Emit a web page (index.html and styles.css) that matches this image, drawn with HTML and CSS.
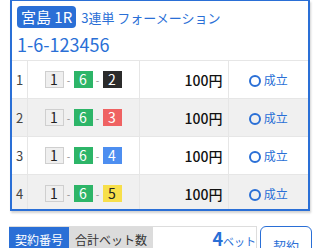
FILE: index.html
```html
<!DOCTYPE html>
<html lang="ja">
<head>
<meta charset="utf-8">
<link rel="stylesheet" href="styles.css">
</head>
<body>
<div class="card">
  <div class="head">
    <div class="title-line">
      <span class="badge">宮島 1R</span>
      <span class="title">3連単 フォーメーション</span>
    </div>
    <div class="combo-text">1-6-123456</div>
  </div>
  <table class="bets">
    <tr>
      <td class="no">1</td>
      <td class="combo"><span class="box b1">1</span><span class="dash">-</span><span class="box b6">6</span><span class="dash">-</span><span class="box b2">2</span></td>
      <td class="amt">100円</td>
      <td class="st"><span class="ring"></span>成立</td>
    </tr>
    <tr class="alt">
      <td class="no">2</td>
      <td class="combo"><span class="box b1">1</span><span class="dash">-</span><span class="box b6">6</span><span class="dash">-</span><span class="box b3">3</span></td>
      <td class="amt">100円</td>
      <td class="st"><span class="ring"></span>成立</td>
    </tr>
    <tr>
      <td class="no">3</td>
      <td class="combo"><span class="box b1">1</span><span class="dash">-</span><span class="box b6">6</span><span class="dash">-</span><span class="box b4">4</span></td>
      <td class="amt">100円</td>
      <td class="st"><span class="ring"></span>成立</td>
    </tr>
    <tr class="alt">
      <td class="no">4</td>
      <td class="combo"><span class="box b1">1</span><span class="dash">-</span><span class="box b6">6</span><span class="dash">-</span><span class="box b5">5</span></td>
      <td class="amt">100円</td>
      <td class="st"><span class="ring"></span>成立</td>
    </tr>
  </table>
</div>
<div class="footer">
  <div class="summary">
    <span class="tab on">契約番号</span>
    <span class="tab">合計ベット数</span>
    <span class="count"><b>4</b>ベット</span>
  </div>
  <button class="btn">契約</button>
</div>
</body>
</html>
```

FILE: styles.css
```css
* { box-sizing: border-box; }
body {
  margin: 0;
  background: #fff;
  font-family: "Noto Sans CJK JP", "Noto Sans", sans-serif;
  color: #222;
}
.card {
  margin-left: 10px;
  width: 300px;
  height: 211px;
  border: 2px solid #2a6fd6;
  border-top-width: 1px;
  overflow: hidden;
  box-shadow: 1px 2px 2px rgba(0,0,0,0.18);
  background: #fff;
}
.head {
  padding: 5px 5px 0 5px;
  height: 59px;
}
.title-line {
  display: flex;
  align-items: center;
  gap: 5px;
  height: 22px;
}
.badge {
  background: #2a6fd6;
  color: #fff;
  font-size: 15px;
  line-height: 22px;
  height: 22px;
  padding: 0 4px;
  border-radius: 4px;
}
.title {
  color: #2a6fd6;
  font-size: 13px;
}
.combo-text {
  color: #2a6fd6;
  font-size: 18px;
  line-height: 24px;
  margin-top: 4px;
}
.bets {
  width: 296px;
  border-collapse: collapse;
  table-layout: fixed;
}
.bets td {
  height: 38px;
  border-top: 1px solid #e6e6e6;
  border-left: 1px solid #e6e6e6;
  padding: 0;
}
.bets td:first-child { border-left: none; }
.bets tr.alt td { background: #f0f0f0; }
.no {
  width: 15px;
  font-size: 13px;
  color: #444;
  padding-left: 4px !important;
}
.combo {
  width: 112px;
  text-align: center;
  font-size: 0;
}
.box {
  display: inline-block;
  width: 19px;
  height: 17px;
  line-height: 17px;
  font-size: 14px;
  text-align: center;
  vertical-align: middle;
  color: #fff;
}
.b1 { background: #efefef; color: #222; border: 1px solid #cfcfcf; line-height: 15px; }
.b6 { background: #2db568; }
.b2 { background: #2b2b2b; }
.b3 { background: #ef6262; }
.b4 { background: #4d8ef0; }
.b5 { background: #f7df4a; color: #222; }
.dash {
  display: inline-block;
  width: 10px;
  font-size: 10px;
  color: #888;
  vertical-align: middle;
  text-align: center;
}
.amt {
  width: 89px;
  text-align: right;
  font-size: 14px;
  font-weight: 500;
  color: #111;
  padding-right: 5px !important;
}
.st {
  text-align: center;
  color: #2a6fd6;
  font-size: 12px;
}
.ring {
  display: inline-block;
  width: 12px;
  height: 12px;
  border: 2px solid #2a6fd6;
  border-radius: 50%;
  vertical-align: -2px;
  margin-right: 3px;
}
.footer {
  display: flex;
  gap: 3px;
  margin-top: 15px;
  padding-left: 9px;
}
.summary {
  display: flex;
  align-items: flex-start;
  width: 248px;
  height: 30px;
  border: 1px solid #dddddd;
  border-left: none;
}
.tab {
  font-size: 12px;
  line-height: 22px;
  padding: 2px 6px 0;
  background: #dcdcdc;
  color: #333;
}
.tab.on {
  background: #2a6fd6;
  color: #fff;
}
.count {
  margin-left: auto;
  color: #2a6fd6;
  font-size: 11px;
  line-height: 22px;
}
.count b {
  font-size: 18px;
  font-weight: 700;
}
.btn {
  width: 52px;
  height: 34px;
  border: 1px solid #2a6fd6;
  border-radius: 6px;
  background: #fff;
  color: #2a6fd6;
  font-family: inherit;
  font-size: 13px;
  padding: 4px 0 0;
}
```
